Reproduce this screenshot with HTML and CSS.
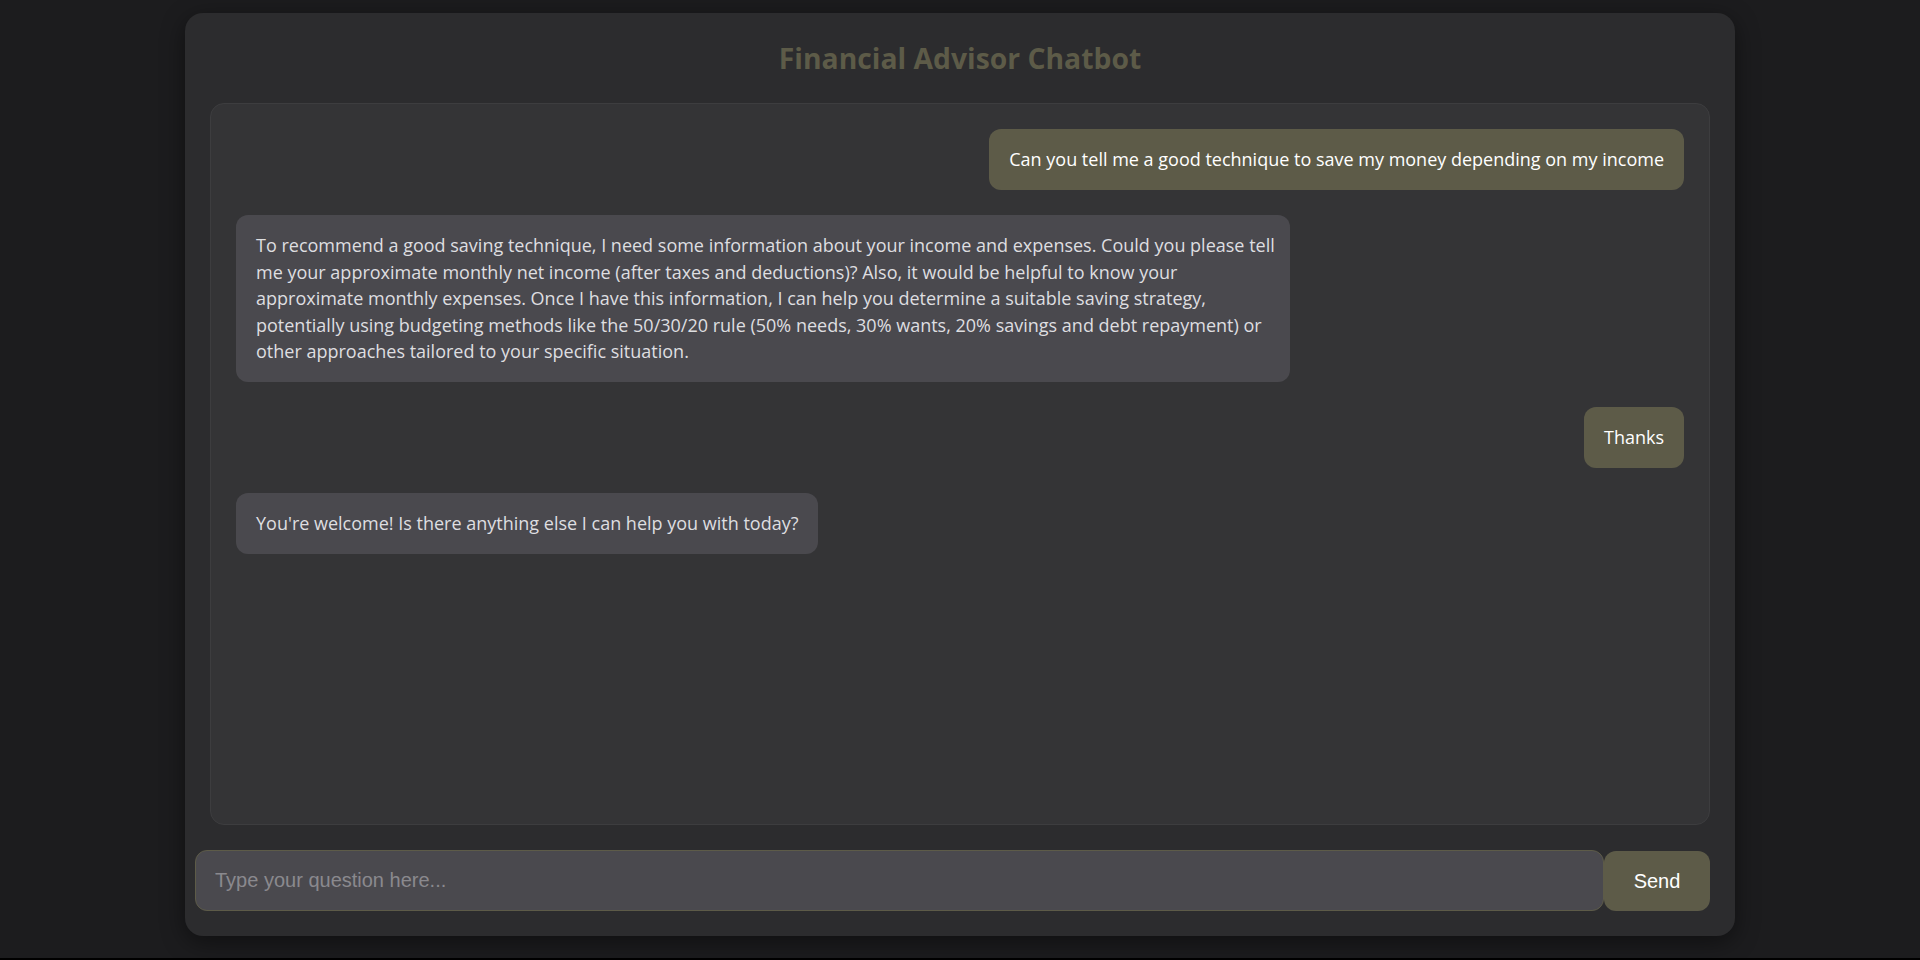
FILE: index.html
```html
<!DOCTYPE html>
<html lang="en">
<head>
<meta charset="utf-8">
<title>Financial Advisor Chatbot</title>
<link rel="stylesheet" href="styles.css">
</head>
<body>
<main class="app">
  <h1 class="title">Financial Advisor Chatbot</h1>
  <section class="chat">
    <div class="msg user">Can you tell me a good technique to save my money depending on my income</div>
    <div class="msg bot">To recommend a good saving technique, I need some information about your income and expenses. Could you please tell<br>me your approximate monthly net income (after taxes and deductions)? Also, it would be helpful to know your<br>approximate monthly expenses. Once I have this information, I can help you determine a suitable saving strategy,<br>potentially using budgeting methods like the 50/30/20 rule (50% needs, 30% wants, 20% savings and debt repayment) or<br>other approaches tailored to your specific situation.</div>
    <div class="msg user">Thanks</div>
    <div class="msg bot">You're welcome! Is there anything else I can help you with today?</div>
  </section>
  <form class="composer">
    <input class="composer-input" type="text" placeholder="Type your question here..." autofocus>
    <button class="composer-send" type="button">Send</button>
  </form>
</main>
</body>
</html>
```

FILE: styles.css
```css
html {
  background: #000;
}

body {
  margin: 0;
  height: 958px;
  background: #1c1c1e;
  font-family: "Open Sans", "Noto Sans", sans-serif;
  overflow: hidden;
}

.app {
  width: 1550px;
  height: 923px;
  margin: 13px auto 0;
  box-sizing: border-box;
  padding: 25px;
  background: #2c2c2e;
  border-radius: 18px;
  box-shadow: 0 6px 24px rgba(0, 0, 0, 0.45);
  display: flex;
  flex-direction: column;
}

.title {
  margin: 0 0 25px;
  text-align: center;
  font-size: 28.3px;
  line-height: 40px;
  font-weight: 700;
  color: #5d5b48;
}

.chat {
  flex: 1;
  display: flex;
  flex-direction: column;
  align-items: flex-start;
  gap: 25px;
  padding: 25px;
  background: #343436;
  border: 1px solid #3d3d3f;
  border-radius: 14px;
  overflow: hidden;
}

.msg {
  max-width: 70%;
  padding: 17.3px 20px;
  border-radius: 12px;
  font-size: 18px;
  line-height: 26.4px;
  white-space: nowrap;
}

.msg.user {
  align-self: flex-end;
  background: #5d5b48;
  color: #ffffff;
}

.msg.bot {
  background: #4a494e;
  color: #dedee0;
}

.composer {
  display: flex;
  margin: 25px 0 0 -15px;
  height: 61px;
}

.composer-input {
  flex: 1;
  min-width: 0;
  box-sizing: border-box;
  height: 61px;
  padding: 0 19px;
  background: #4a494e;
  border: 1px solid #5d5b48;
  border-radius: 12px;
  color: #ffffff;
  font-family: "Liberation Sans", Arial, sans-serif;
  font-size: 20px;
  outline: none;
}

.composer-input::placeholder {
  color: #8a898e;
}

.composer-send {
  width: 106px;
  height: 60px;
  margin-top: 1px;
  border: none;
  border-radius: 12px;
  background: #5d5b48;
  color: #ffffff;
  font-family: "Liberation Sans", Arial, sans-serif;
  font-size: 20px;
  cursor: pointer;
}
```
